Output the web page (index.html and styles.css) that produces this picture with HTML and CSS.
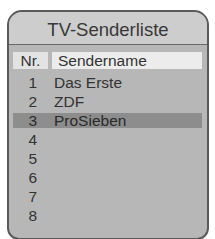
FILE: index.html
```html
<!DOCTYPE html>
<html>
<head>
<meta charset="utf-8">
<link rel="stylesheet" href="styles.css">
</head>
<body>
<div class="panel">
  <div class="title">TV-Senderliste</div>
  <div class="list">
    <div class="row head"><span class="nr">Nr.</span><span class="name">Sendername</span></div>
    <div class="row"><span class="nr">1</span><span class="name">Das Erste</span></div>
    <div class="row"><span class="nr">2</span><span class="name">ZDF</span></div>
    <div class="row sel"><span class="nr">3</span><span class="name">ProSieben</span></div>
    <div class="row"><span class="nr">4</span><span class="name"></span></div>
    <div class="row"><span class="nr">5</span><span class="name"></span></div>
    <div class="row"><span class="nr">6</span><span class="name"></span></div>
    <div class="row"><span class="nr">7</span><span class="name"></span></div>
    <div class="row"><span class="nr">8</span><span class="name"></span></div>
  </div>
</div>
</body>
</html>
```
FILE: styles.css
```css
html, body {
  margin: 0;
  background: #ffffff;
  overflow: hidden;
}
body {
  width: 215px;
  height: 239px;
  font-family: "Liberation Sans", Arial, sans-serif;
  color: #333333;
}
.panel {
  margin: 10px 0 0 7px;
  width: 198px;
  height: 226px;
  border: 2px solid #5a5a5a;
  border-radius: 15px 15px 12px 12px;
  background: #b7b7b7;
  overflow: hidden;
}
.title {
  height: 32px;
  border-bottom: 1px solid #6a6a6a;
  background: #cdcdcd;
  text-align: center;
  font-size: 18.5px;
  line-height: 36px;
  color: #383838;
}
.list {
  display: flex;
  flex-direction: column;
  gap: 4px;
  padding: 7px 5px 0 4px;
}
.row {
  display: flex;
  height: 15px;
  font-size: 15.5px;
  line-height: 15px;
}
.row .nr {
  width: 24px;
  padding-right: 11px;
  text-align: right;
  flex: none;
}
.row .name {
  flex: 1;
  padding-left: 6px;
}
.row.head {
  height: 17px;
  line-height: 18px;
  gap: 4px;
  margin-bottom: 2px;
}
.row.head .nr {
  width: 35px;
  padding: 0;
  text-align: center;
  background: #e3e3e3;
}
.row.head .name {
  background: #ececec;
  padding-left: 6px;
}
.row.sel {
  background: #8d8d8d;
  color: #2a2a2a;
}
```
